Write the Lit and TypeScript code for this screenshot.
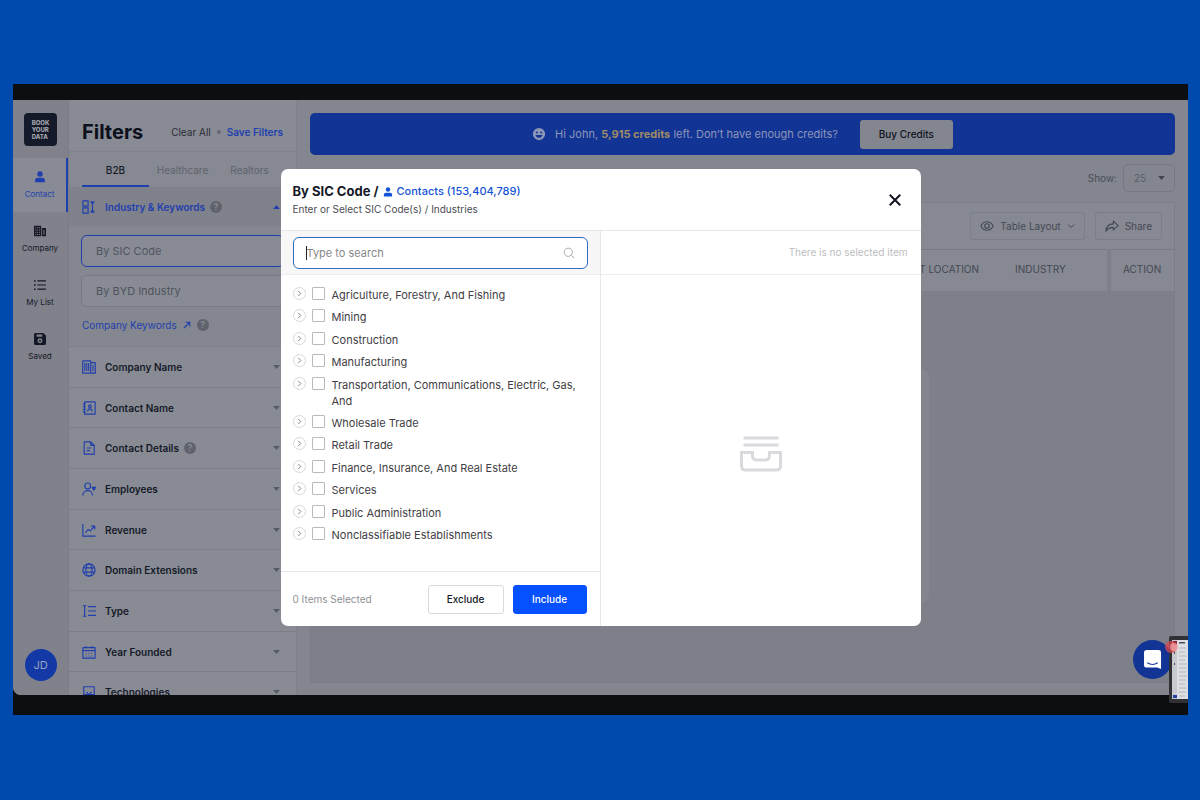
import { LitElement, html, css, svg, nothing } from "lit";
import { customElement } from "lit/decorators.js";

const stroke = (body: unknown, cls = "i14", box = "0 0 16 16") =>
  html`<svg class="icon ${cls}" viewBox=${box} fill="none" stroke="currentColor" stroke-width="1.3" stroke-linejoin="round" aria-hidden="true">${body}</svg>`;
const solid = (body: unknown, cls = "i14", box = "0 0 16 16") =>
  html`<svg class="icon ${cls}" viewBox=${box} fill="currentColor" aria-hidden="true">${body}</svg>`;

const person = svg`<circle cx="8" cy="4" r="3.6"/><path d="M1.4 15v-2.400c0-2.200 1.400-3.600 3.400-3.600h6.400c2 0 3.400 1.400 3.400 3.600V15z"/>`;
const caret = svg`<path d="M0 0h10L5 6z"/>`;
const caretUp = svg`<path d="M0 6h10L5 0z"/>`;

const nav = [
  { label: "Contact", icon: person, active: true },
  {
    label: "Company",
    icon: svg`<path fill-rule="evenodd" d="M0 1h9.500v14H0zM1.800 3v1.300h1.300V3zM4.200 3v1.300h1.300V3zM6.600 3v1.300h1.300V3zM1.800 6v1.300h1.300V6zM4.200 6v1.300h1.300V6zM6.600 6v1.300h1.300V6zM1.800 9v1.300h1.300V9zM4.200 9v1.300h1.300V9zM6.600 9v1.300h1.300V9zM1.800 12v1.300h1.300V12zM4.200 12v1.300h1.300V12zM6.600 12v1.300h1.300V12z"/><path fill-rule="evenodd" d="M10.500 4H16v11h-5.500zM12.600 6.500v6h1.300v-6z"/>`,
  },
  {
    label: "My List",
    icon: svg`<path d="M0 1.500h2.200v2H0zM0 7h2.200v2H0zM0 12.500h2.200v2H0zM4.500 1.700H16v1.600H4.500zM4.500 7.200H16v1.600H4.500zM4.500 12.700H16v1.600H4.500z"/>`,
  },
  {
    label: "Saved",
    icon: svg`<path fill-rule="evenodd" d="M2 0h10.500L16 3.500V14c0 1.200-.8 2-2 2H2c-1.200 0-2-.8-2-2V2C0 .8.800 0 2 0zM3.500 2v3h7.500V2zM8 7a3.300 3.300 0 1 0 0 6.600A3.300 3.300 0 0 0 8 7zm0 2a1.300 1.300 0 1 1 0 2.600A1.300 1.300 0 0 1 8 9z"/>`,
  },
];

const filters = [
  { label: "Company Name", icon: svg`<path d="M.8 1h9.200v14H.8zM10 3h5.200v12H10M3.200 3.500v9M5.400 3.500v9M7.600 3.500v9M12.600 5.500v7"/>` },
  { label: "Contact Name", icon: svg`<path d="M3 1h12v14H3zM1 3.500h3M1 6.500h3M1 9.500h3M1 12.500h3M6.500 12c0-4 5-4 5 0"/><circle cx="9" cy="6" r="1.500"/>` },
  { label: "Contact Details", help: true, icon: svg`<path d="M2.500 1h7.500l4 4v10H2.500zM10 1v4h4M5.500 8h5M5.500 11h3.500"/>` },
  { label: "Employees", icon: svg`<circle cx="6.500" cy="4.500" r="3.300"/><path d="M1 15.500c0-7.500 11-7.500 11 0"/><path fill="currentColor" d="M11.500 6h4l-2 3.500z"/>` },
  { label: "Revenue", icon: svg`<path d="M1 1v14h14.500M4 11l3-3.500 2.500 1.500L14 4M10.500 3.500H14.500V7.500"/>` },
  { label: "Domain Extensions", icon: svg`<circle cx="8" cy="8" r="7"/><ellipse cx="8" cy="8" rx="3.500" ry="7"/><path d="M1.500 5.500h13M1.500 10.500h13"/>` },
  { label: "Type", icon: svg`<path d="M3 2v12M1 2h4M1 14h4M7 3h9M7 8h9M7 13h9"/>` },
  { label: "Year Founded", icon: svg`<path d="M1 3h14v12H1zM1 6.500h14M4.500 1v3M11.500 1v3M5 9v1M8 9v1M11 9v1M5 12v1M8 12v1M11 12v1"/>` },
  { label: "Technologies", icon: svg`<path d="M2 2h12v9H2zM1 13.500h14M5 8l3 3 3-3"/>` },
];

const industries = [
  "Agriculture, Forestry, And Fishing",
  "Mining",
  "Construction",
  "Manufacturing",
  "Transportation, Communications, Electric, Gas, And",
  "Wholesale Trade",
  "Retail Trade",
  "Finance, Insurance, And Real Estate",
  "Services",
  "Public Administration",
  "Nonclassifiable Establishments",
];

@customElement("app-root")
export class AppRoot extends LitElement {
  static styles = css`
    :host { display: block; font-family: Inter, "Liberation Sans", sans-serif; color: #151927; }
    *, *::before, *::after { box-sizing: border-box; }
    button, input, select { font: inherit; color: inherit; margin: 0; }
    button { cursor: pointer; }
    a { text-decoration: none; color: inherit; }
    h1, h2, p, ul { margin: 0; padding: 0; }
    ul { list-style: none; }
    .icon { display: block; flex: none; }
    .i14 { width: 14px; height: 14px; }
    .i12 { width: 12px; height: 12px; }
    .i10 { width: 10px; height: 10px; }
    .i8 { width: 8px; height: 8px; }
    .caret { width: 7px; height: 4px; }

    .page { height: 100vh; min-height: 640px; padding: 84px 12px 85px 13px; background: #004aad; display: flex; }
    .frame { flex: 1; min-width: 0; background: #0d0e0f; padding: 16px 0 20px; display: flex; position: relative; }
    .app { flex: 1; min-width: 0; display: flex; background: #83868f; overflow: hidden; border-bottom-left-radius: 8px; position: relative; }

    .rail { width: 56px; flex: none; background: #80818a; border-right: 1px solid #7a7d86; display: flex; flex-direction: column; align-items: center; padding: 13px 0 14px; }
    .logo { width: 33px; height: 33px; border-radius: 4px; background: #151a2b; color: #a3a5ab; font-size: 6px; line-height: 7px; font-weight: 800; display: grid; place-content: center; }
    .nav { width: 100%; margin-top: 12px; }
    .nav-item { height: 54px; display: flex; flex-direction: column; align-items: center; justify-content: center; gap: 5px; font-size: 8px; line-height: 12px; padding-right: 1px; }
    .nav-item.active { background: #888b95; color: #1f3fae; border-right: 2px solid #1f3fae; padding-right: 0; }
    .avatar { margin-top: auto; width: 32px; height: 32px; border-radius: 50%; border: 0; padding: 0; background: #1239a5; color: #9aa3bf; font-size: 11px; }

    .filters { width: 228px; flex: none; background: #888b94; border-right: 1px solid #7e818a; overflow: hidden; font-size: 10px; }
    .filters-head { height: 52px; padding: 13px 13px 0; display: flex; align-items: center; border-bottom: 1px solid #7f828b; }
    .filters-head h1 { font-size: 20px; line-height: 24px; font-weight: 700; margin-right: auto; color: #0c101c; }
    .head-links { display: flex; align-items: center; gap: 6px; font-size: 10px; color: #2a2d39; }
    .dot { width: 4px; height: 4px; border-radius: 50%; background: #666973; }
    .save { color: #1f3fae; font-weight: 600; }
    .tabs { height: 35px; padding: 0 13px; display: flex; background: #868992; }
    .tab { border: 0; border-top: 2px solid transparent; border-bottom: 2px solid transparent; background: none; width: 67px; padding: 0; font-size: 10px; color: #5f626c; }
    .tab.on { color: #151927; border-bottom-color: #1f3fae; font-weight: 500; }
    .row { display: flex; align-items: center; gap: 9px; padding: 0 16px 0 13px; font-weight: 600; border: 0; width: 100%; background: none; font-size: 10px; text-align: left; }
    .row .label { display: flex; align-items: center; gap: 5px; margin-right: auto; }
    .row .icon.i14 { color: #1f3fae; }
    .row .caret { color: #555963; }
    .open-row { height: 40px; background: #7f828b; color: #1f3fae; border-bottom: 1px solid #83868f; }
    .open-row .caret { color: #1f3fae; }
    .help { width: 12px; height: 12px; border-radius: 50%; background: #5f626b; color: #8a8d96; font-size: 9px; font-weight: 600; line-height: 12px; text-align: center; }
    .open-body { height: 119px; background: #84878f; padding: 8px 12px 0; display: flex; flex-direction: column; gap: 8px; }
    .field { height: 32px; border: 1px solid #777a84; border-radius: 6px; background: #888b94; padding: 0 14px; width: 100%; font-size: 11px; }
    .field.on { border-color: #1f3fae; }
    .field::placeholder { color: #50535d; opacity: 1; }
    .keywords { display: flex; align-items: center; gap: 6px; color: #1f3fae; padding: 4px 0 0 1px; }
    .filter-list { height: 366px; display: flex; flex-direction: column; }
    .filter-list li { flex: 1; display: flex; border-top: 1px solid #7c7f88; }

    .main { flex: 1; min-width: 0; padding: 13px 13px 12px 13px; display: flex; flex-direction: column; gap: 9px; }
    .banner { height: 42px; border-radius: 5px; background: #123495; color: #8d97b8; display: flex; align-items: center; justify-content: center; gap: 9px; font-size: 11px; }
    .banner strong { color: #a08a66; font-weight: 700; }
    .buy { height: 29px; width: 93px; border: 0; border-radius: 3px; background: #83868f; color: #10131e; font-weight: 500; font-size: 10px; margin-left: 13px; padding: 0; }
    .show { display: flex; justify-content: flex-end; align-items: center; gap: 6px; font-size: 10px; color: #4a4d57; }
    .select-wrap { display: flex; align-items: center; position: relative; color: #41444e; }
    .select-wrap select { appearance: none; width: 52px; height: 28px; border: 1px solid #757882; border-radius: 5px; background: none; padding: 0 10px; font-size: 10px; color: #5a5d67; }
    .select-wrap .caret { position: absolute; right: 10px; pointer-events: none; }
    .card { flex: 1; min-height: 0; display: flex; flex-direction: column; background: #7d8089; border: 1px solid #7b7e87; margin-top: 1px; }
    .tools { height: 46px; flex: none; background: #868992; display: flex; justify-content: flex-end; align-items: center; gap: 10px; padding: 0 12px; }
    .tool { height: 28px; display: flex; align-items: center; gap: 6px; padding: 0 9px; border: 1px solid #7b7e87; border-radius: 3px; background: none; font-size: 10px; color: #454852; }
    .cols { width: 100%; border-collapse: collapse; background: #868992; border-top: 1px solid #777a83; }
    .cols th { height: 41px; padding: 0 0 2px; font-size: 10px; font-weight: 400; color: #454852; text-align: left; white-space: nowrap; }
    .cols .loc { text-align: right; padding-right: 36px; }
    .cols .ind { width: 94px; border-right: 4px solid #7d8089; }
    .cols .act { width: 65px; padding-left: 12px; }
    .empty { flex: 1; display: grid; place-items: center; }
    .blank { width: 372px; height: 234px; border-radius: 8px; background: #83868f; }

    .cover { position: absolute; inset: 0; display: grid; place-items: center; }
    .modal { width: 640px; max-width: 100%; min-height: 457px; background: #fff; border-radius: 7px; display: grid; grid-template: auto 1fr / 1fr 1fr; overflow: hidden; }
    .modal-head { grid-column: 1 / -1; display: flex; align-items: center; justify-content: space-between; padding: 14px 19px 13px 12px; border-bottom: 1px solid #e6e7ea; }
    .title { display: flex; align-items: center; gap: 4px; line-height: 17px; }
    .title h2 { font-size: 13px; font-weight: 700; }
    .title .who { display: flex; align-items: center; gap: 4px; font-size: 11px; font-weight: 500; color: #1553d6; }
    .sub { font-size: 10px; line-height: 15px; color: #4a4b50; margin-top: 2px; }
    .close { border: 0; background: none; padding: 0; width: 14px; height: 14px; color: #10131e; }
    .pick { display: flex; flex-direction: column; border-right: 1px solid #e6e7ea; min-width: 0; }
    .search { background: #f7f7f8; border-bottom: 1px solid #ececee; padding: 0 12px; height: 44px; position: relative; display: flex; align-items: center; }
    .search input { width: 100%; height: 32px; border: 1px solid #2e6cc4; border-radius: 6px; background: #fff; padding: 0 36px 0 13px; font-size: 11px; outline: none; }
    .search input::placeholder { color: #87888c; opacity: 1; }
    .search .icon { position: absolute; right: 25px; color: #a7a8ac; }
    .beam { position: absolute; left: 25px; width: 1px; height: 14px; background: #222; }
    .options { flex: 1; display: flex; flex-direction: column; justify-content: space-between; padding: 12px 12px 28px; font-size: 11px; line-height: 16px; color: #3f4045; }
    .option { display: flex; gap: 6px; align-items: flex-start; }
    .option label { display: flex; gap: 7px; align-items: flex-start; }
    .option input { appearance: none; flex: none; width: 13px; height: 13px; border: 1px solid #b8b9bc; border-radius: 1px; background: #fff; }
    .more { flex: none; width: 13px; height: 13px; border: 1px solid #d8d8da; border-radius: 50%; background: #fff; padding: 0; color: #7d7e82; display: grid; place-items: center; }
    .more .icon { width: 7px; height: 7px; }
    .foot { height: 55px; border-top: 1px solid #e6e7ea; padding: 0 13px 0 12px; display: flex; align-items: center; gap: 9px; }
    .count { font-size: 10px; color: #8f9094; margin-right: auto; }
    .btn { height: 29px; width: 76px; border-radius: 3px; border: 1px solid #d9dadd; background: #fff; font-size: 10px; font-weight: 500; padding: 0; }
    .btn.primary { width: 74px; background: #0550ff; border-color: #0550ff; color: #fff; }
    .chosen { display: flex; flex-direction: column; }
    .chosen p { height: 44px; line-height: 43px; border-bottom: 1px solid #ececee; text-align: right; padding-right: 13px; font-size: 10px; color: #bcbdc0; }
    .tray { flex: 1; display: grid; place-items: center; padding-top: 6px; color: #d9dadd; }
    .tray svg { width: 42px; height: 36px; }

    .chat { position: absolute; right: 16px; bottom: 36px; width: 39px; height: 39px; border-radius: 50%; border: 0; padding: 0; background: #123495; display: grid; place-items: center; }
    .chat svg { width: 18px; height: 19px; }
    .thumb { position: absolute; right: 0; bottom: 12px; width: 19px; height: 67px; }
    .thumb svg { display: block; width: 100%; height: 100%; overflow: visible; }
  `;

  private help() {
    return html`<span class="help" title="Help">?</span>`;
  }

  private rail() {
    return html`<aside class="rail">
      <a class="logo" href="#home"><span>BOOK</span><span>YOUR</span><span>DATA</span></a>
      <nav class="nav">
        ${nav.map((n) => html`<a class="nav-item ${n.active ? "active" : ""}" href="#${n.label}">${solid(n.icon, "i12")}<span>${n.label}</span></a>`)}
      </nav>
      <button class="avatar">JD</button>
    </aside>`;
  }

  private sidebar() {
    return html`<section class="filters">
      <header class="filters-head">
        <h1>Filters</h1>
        <div class="head-links"><a href="#clear">Clear All</a><span class="dot"></span><a class="save" href="#save">Save Filters</a></div>
      </header>
      <div class="tabs"><button class="tab on">B2B</button><button class="tab">Healthcare</button><button class="tab">Realtors</button></div>
      <button class="row open-row">
        ${stroke(svg`<path d="M1 1h6v6H1zM1 9h6v6H1zM12 1.500v13M9.500 2h5M9.500 14h5M10.500 4L12 2l1.500 2M10.500 12l1.500 2 1.500-2"/>`)}
        <span class="label">Industry &amp; Keywords ${this.help()}</span>
        ${solid(caretUp, "caret", "0 0 10 6")}
      </button>
      <div class="open-body">
        <input class="field on" aria-label="By SIC Code" placeholder="By SIC Code" />
        <input class="field" aria-label="By BYD Industry" placeholder="By BYD Industry" />
        <div class="keywords"><a href="#keywords">Company Keywords</a>${stroke(svg`<path stroke-width="2.200" d="M2 14L13 3M5 2.500h8.500V11"/>`, "i8")}${this.help()}</div>
      </div>
      <ul class="filter-list">
        ${filters.map(
          (f) => html`<li><button class="row">${stroke(f.icon)}<span class="label">${f.label} ${f.help ? this.help() : nothing}</span>${solid(caret, "caret", "0 0 10 6")}</button></li>`,
        )}
      </ul>
    </section>`;
  }

  private main() {
    return html`<main class="main">
      <div class="banner">
        ${solid(svg`<path fill-rule="evenodd" d="M8 1a7 7 0 1 1 0 14A7 7 0 0 1 8 1zM5.500 5a1.200 1.200 0 1 0 0 2.400 1.200 1.200 0 0 0 0-2.400zm5 0a1.200 1.200 0 1 0 0 2.400 1.200 1.200 0 0 0 0-2.400zM4 9.200c.8 4.300 7.200 4.300 8 0z"/>`)}
        <span>Hi John, <strong>5,915 credits</strong> left. Don’t have enough credits?</span>
        <button class="buy">Buy Credits</button>
      </div>
      <div class="show">
        <label for="size">Show:</label>
        <span class="select-wrap"><select id="size"><option>25</option></select>${solid(caret, "caret", "0 0 10 6")}</span>
      </div>
      <div class="card">
        <div class="tools">
          <button class="tool">${stroke(svg`<path d="M1 8c3-6.500 11-6.500 14 0-3 6.500-11 6.500-14 0z"/><circle cx="8" cy="8" r="2.600"/>`)}Table Layout${stroke(svg`<path stroke-width="2" d="M2 5l6 6 6-6"/>`, "i8")}</button>
          <button class="tool">${stroke(svg`<path d="M9.500 2.500L15 7.500l-5.500 5V9.500C5 9.500 2.500 11 1 14c.2-5 3-8.300 8.500-8.500z"/>`)}Share</button>
        </div>
        <table class="cols"><thead><tr><th class="loc">CONTACT LOCATION</th><th class="ind">INDUSTRY</th><th class="act">ACTION</th></tr></thead></table>
        <div class="empty"><div class="blank"></div></div>
      </div>
    </main>`;
  }

  private modal() {
    return html`<div class="cover"><div class="modal" role="dialog" aria-label="By SIC Code">
      <header class="modal-head">
        <div>
          <div class="title"><h2>By SIC Code /</h2><span class="who">${solid(person, "i10")}Contacts (153,404,789)</span></div>
          <p class="sub">Enter or Select SIC Code(s) / Industries</p>
        </div>
        <button class="close" aria-label="Close">${stroke(svg`<path stroke-width="2.200" d="M2 2l12 12M14 2L2 14"/>`)}</button>
      </header>
      <section class="pick">
        <div class="search">
          <input aria-label="Type to search" placeholder="Type to search" /><span class="beam"></span>
          ${stroke(svg`<circle cx="7" cy="7" r="5.500"/><path d="M11 11l4 4"/>`, "i12")}
        </div>
        <ul class="options">
          ${industries.map(
            (name) => html`<li class="option"><button class="more" aria-label="Expand ${name}">${stroke(svg`<path stroke-width="2.200" d="M5 2l6 6-6 6"/>`)}</button><label><input type="checkbox" /><span>${name}</span></label></li>`,
          )}
        </ul>
        <footer class="foot"><span class="count">0 Items Selected</span><button class="btn">Exclude</button><button class="btn primary">Include</button></footer>
      </section>
      <section class="chosen">
        <p>There is no selected item</p>
        <div class="tray">
          <svg viewBox="0 0 42 36" fill="none" stroke="currentColor" stroke-width="3" aria-hidden="true"><path d="M3.500 2h35M3.500 9h35M1.500 16.500h11v3q0 4.500 4.500 4.500h8q4.500 0 4.500-4.500v-3h11V30q0 4-4 4h-31q-4 0-4-4z"/></svg>
        </div>
      </section>
    </div></div>`;
  }

  render() {
    return html`<div class="page"><div class="frame">
      <div class="app">${this.rail()}${this.sidebar()}${this.main()}${this.modal()}</div>
      <button class="chat" aria-label="Chat"><svg viewBox="0 0 19 20"><path fill="#fff" d="M3 0h12.500Q18 0 18 2.500V20l-4-1.500H3Q0 18.500 0 16V3Q0 0 3 0z"/><path d="M3.500 13.500q5.500 3.500 11 0" fill="none" stroke="#123495" stroke-width="1.200"/></svg></button>
      <div class="thumb" aria-hidden="true"><svg viewBox="0 0 19 67">
        <path fill="#303135" d="M2 0h17v67H2Q0 67 0 65V2Q0 0 2 0z"/><path fill="#c9cad0" d="M3 4h16v59H3z"/><path fill="#dddee2" d="M8 4h11v59H8z"/>
        <path fill="#8e2034" d="M4 5h4v4H4z"/><path fill="#4c4f58" d="M10 6h6v1.500h-6zM5 16h1v2H5zM5 27h1v2H5z"/><path fill="#24409c" d="M4 59h4v3H4z"/>
        <path stroke="#b4b6bc" stroke-width="1" d="M10 12h7M10 16h6M10 20h8M10 24h6M10 28h8M10 32h8M10 36h7M10 40h8M10 44h7M10 48h6M10 52h8M10 56h7M10 60h6"/>
        <circle cx="2" cy="11" r="6" fill="#d94552" opacity=".75"/><circle cx="5" cy="11" r="4" fill="#f3a3a8" opacity=".7"/>
      </svg></div>
    </div></div>`;
  }
}
